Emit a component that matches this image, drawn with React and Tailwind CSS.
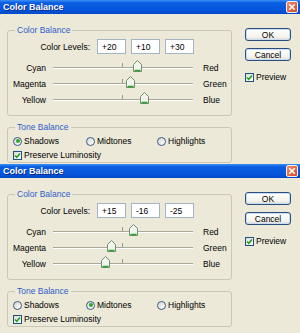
import React from "react";

function Thumb() {
  return (
    <svg width="9" height="12" viewBox="0 0 9 12" className="block">
      <path d="M4.5 0.5 L8.5 4.5 L8.5 11.5 L0.5 11.5 L0.5 4.5 Z" fill="#f1f4ec" stroke="#6f8f6f" strokeWidth="1" />
      <path d="M1.5 10.5 H7.5" stroke="#28a428" strokeWidth="1.5" />
      <path d="M1.5 5 V9.5" stroke="#ffffff" strokeWidth="1" />
    </svg>
  );
}

function Check() {
  return (
    <span className="flex h-[9px] w-[9px] items-center justify-center border border-[#1c5180] bg-[linear-gradient(135deg,#dcdcd6,#ffffff)]">
      <svg width="7" height="7" viewBox="0 0 7 7" className="block">
        <path d="M1 3.5 L2.8 5.3 L6 1.6" fill="none" stroke="#21a121" strokeWidth="1.6" />
      </svg>
    </span>
  );
}

function Radio({ on }) {
  return (
    <span className="flex h-[9px] w-[9px] items-center justify-center rounded-full border border-[#37588a] bg-[linear-gradient(135deg,#d8d8d0,#ffffff)]">
      {on ? <span className="h-[4px] w-[4px] rounded-full bg-[#2aa82a]" /> : null}
    </span>
  );
}

function SliderRow({ left, right, v }) {
  return (
    <div className="flex h-[16px] items-center">
      <div className="w-[38px] text-right">{left}</div>
      <div className="relative ml-[7px] h-[16px] w-[140px] pt-[7px]">
        <div className="h-[2px] w-full border-t border-b border-t-[#a9a79a] border-b-white" />
        <div className="absolute left-[69px] top-[3px] h-[4px] w-[1px] bg-[#9a988c]" />
        <div className="absolute top-0" style={{ left: `${70 + v * 0.7 - 4.5}px` }}>
          <Thumb />
        </div>
      </div>
      <div className="ml-[10px]">{right}</div>
    </div>
  );
}

function Button({ children }) {
  return (
    <div className="flex h-[13px] w-[46px] items-center justify-center rounded-[3px] border border-[#2c4e7e] bg-[linear-gradient(#ffffff,#f3f2ec_75%,#d9d6c8)] shadow-[inset_0_0_0_1px_#c9dbf5]">
      {children}
    </div>
  );
}

function fmt(v) {
  return v > 0 ? `+${v}` : `${v}`;
}

function Dialog({ values, tone, height }) {
  return (
    <div className="flex flex-col overflow-hidden bg-[#ece9d8]" style={{ height: `${height}px` }}>
      <div className="flex h-[14px] shrink-0 items-center justify-between bg-[linear-gradient(#3d8ff5,#0b5de2_20%,#0556dc_70%,#0349c9)] pl-[3px] pr-[2px]">
        <span className="text-[9px] font-bold leading-none text-white [text-shadow:1px_1px_0_#0a2a80]">Color Balance</span>
        <span className="flex h-[12px] w-[12px] items-center justify-center rounded-[2px] border border-[#f0f0f0] bg-[linear-gradient(135deg,#f08a6a,#d94a22)]">
          <svg width="8" height="8" viewBox="0 0 8 8" className="block">
            <path d="M1.2 1.2 L6.8 6.8 M6.8 1.2 L1.2 6.8" stroke="#ffffff" strokeWidth="1.6" />
          </svg>
        </span>
      </div>
      <div className="flex pl-[7px] pt-[11px] text-[8.5px] leading-[10px] text-black">
        <div className="flex w-[225px] flex-col">
          <fieldset className="rounded-[3px] border border-[#c9c7b8] pb-[7px]">
            <legend className="ml-[7px] px-[2px] leading-[10px] text-[#2d5ecb]">Color Balance</legend>
            <div className="mt-[4px] flex items-center">
              <div className="w-[82px] text-right">Color Levels:</div>
              <div className="ml-[7px] flex gap-[5px]">
                {values.map((v, i) => (
                  <div key={i} className="flex h-[15px] w-[29px] items-center border border-[#a3b4c8] bg-white pl-[4px]">
                    {fmt(v)}
                  </div>
                ))}
              </div>
            </div>
            <div className="mt-[6px] flex flex-col">
              <SliderRow left="Cyan" right="Red" v={values[0]} />
              <SliderRow left="Magenta" right="Green" v={values[1]} />
              <SliderRow left="Yellow" right="Blue" v={values[2]} />
            </div>
          </fieldset>
          <fieldset className="mt-[6px] rounded-[3px] border border-[#c9c7b8] pb-[1px]">
            <legend className="ml-[7px] px-[2px] leading-[10px] text-[#2d5ecb]">Tone Balance</legend>
            <div className="mt-[3px] flex h-[12px] items-center pl-[5px]">
              <div className="flex w-[73px] items-center gap-[2px]">
                <Radio on={tone === 0} />
                <span>Shadows</span>
              </div>
              <div className="flex w-[71px] items-center gap-[2px]">
                <Radio on={tone === 1} />
                <span>Midtones</span>
              </div>
              <div className="flex items-center gap-[2px]">
                <Radio on={tone === 2} />
                <span>Highlights</span>
              </div>
            </div>
            <div className="mt-[2px] flex h-[12px] items-center gap-[2px] pl-[5px]">
              <Check />
              <span>Preserve Luminosity</span>
            </div>
          </fieldset>
        </div>
        <div className="ml-[13px] flex flex-col pt-[3px]">
          <Button>OK</Button>
          <div className="mt-[7px]">
            <Button>Cancel</Button>
          </div>
          <div className="mt-[11px] flex items-center gap-[2px]">
            <Check />
            <span>Preview</span>
          </div>
        </div>
      </div>
    </div>
  );
}

export default function App() {
  return (
    <div className="flex h-[333px] w-[300px] flex-col overflow-hidden bg-[#ece9d8] font-['Liberation_Sans',Arial,sans-serif]">
      <Dialog values={[20, 10, 30]} tone={0} height={164} />
      <Dialog values={[15, -16, -25]} tone={1} height={169} />
    </div>
  );
}
